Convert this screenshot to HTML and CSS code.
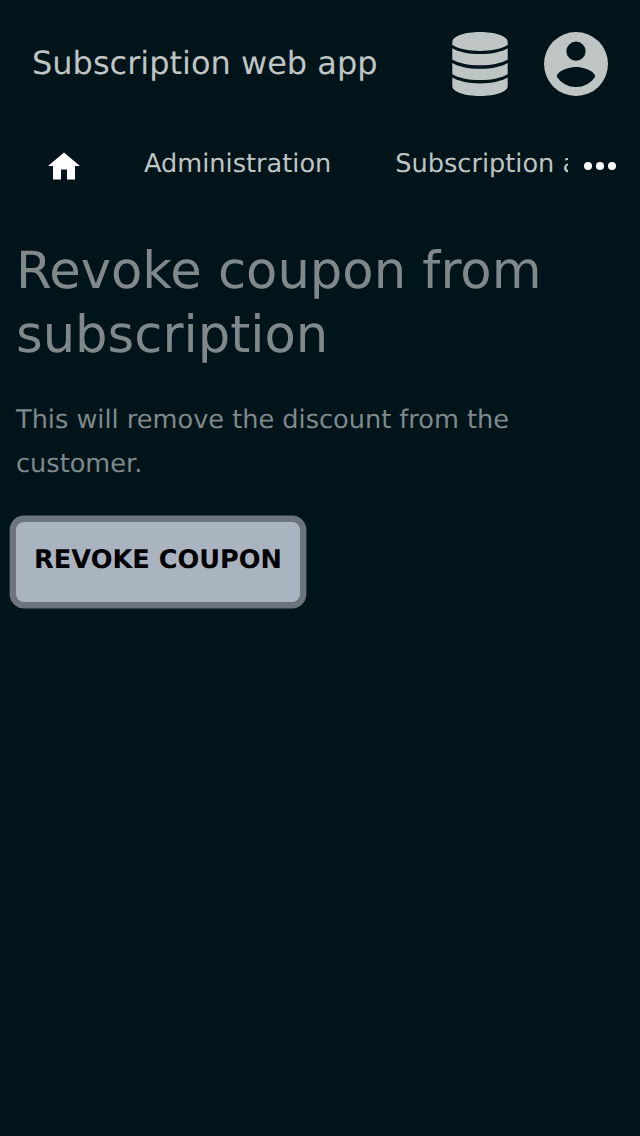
FILE: index.html
```html
<!DOCTYPE html>
<html lang="en">
<head>
<meta charset="utf-8">
<title>Subscription web app</title>
<link rel="stylesheet" href="styles.css">
</head>
<body>
<header class="header">
  <span class="brand">Subscription web app</span>
  <div class="actions">
    <svg class="database" viewBox="0 0 56 64" aria-label="Database">
      <path d="M28 0C43 0 55.700 4 55.700 10V13C50 16.500 40 18.900 28 18.900S6 16.500 .3 13V10C.3 4 13 0 28 0Z"/>
      <path d="M.3 16.300C6 19.800 16 22.100 28 22.100S50 19.800 55.700 16.300V27.500C50 31 40 33.300 28 33.300S6 31 .3 27.500Z"/>
      <path d="M.3 31C6 34.500 16 36.800 28 36.800S50 34.500 55.700 31V42.200C50 45.700 40 48 28 48S6 45.700 .3 42.200Z"/>
      <path d="M.3 45.600C6 49.100 16 51.400 28 51.400S50 49.100 55.700 45.600V54C55.700 60 43 64 28 64S.3 60 .3 54Z"/>
    </svg>
    <svg class="account" viewBox="2 2 20 20" aria-label="Account">
      <path fill-rule="evenodd" d="M12 2a10 10 0 1 0 0 20 10 10 0 0 0 0-20zM12 5a3 3 0 1 1 0 6 3 3 0 0 1 0-6zM12 19.200a7.200 7.200 0 0 1-6-3.220c.03-1.990 4-3.080 6-3.080s5.970 1.090 6 3.080a7.200 7.200 0 0 1-6 3.220z"/>
    </svg>
  </div>
</header>
<nav class="nav">
  <div class="links">
    <a class="home" aria-label="Home"><svg class="home-icon" viewBox="0 0 32 28"><path d="M16 .5L32 14H27V27.500H19V17.500H13V27.500H5V14H0Z"/></svg></a>
    <a class="link">Administration</a>
    <a class="link">Subscription administration</a>
  </div>
  <svg class="more" viewBox="0 0 32 8" aria-label="More"><circle cx="4" cy="4" r="4"/><circle cx="16" cy="4" r="4"/><circle cx="28" cy="4" r="4"/></svg>
</nav>
<main class="content">
  <h1 class="heading">Revoke coupon from subscription</h1>
  <p class="text">This will remove the discount from the customer.</p>
  <button class="button">REVOKE COUPON</button>
</main>
</body>
</html>
```

FILE: styles.css
```css
* { box-sizing: border-box; }
body {
  margin: 0;
  min-height: 1136px;
  background: #001419;
  color: #bfc4c5;
  font-family: "DejaVu Sans", sans-serif;
  text-rendering: geometricPrecision;
}
.header {
  display: flex;
  align-items: center;
  justify-content: space-between;
  height: 128px;
  padding: 0 32px;
}
.brand { font-size: 32px; line-height: 40px; padding-bottom: 2px; }
.actions { display: flex; align-items: center; gap: 36px; fill: #bfc4c5; }
.database { width: 56px; height: 64px; }
.account { width: 64px; height: 64px; }
.nav { display: flex; height: 72px; }
.links {
  display: flex;
  width: 568px;
  gap: 64px;
  padding: 16px 0 0 48px;
  overflow: hidden;
  white-space: nowrap;
}
.home { flex: none; width: 32px; padding-top: 8px; }
.home-icon { display: block; width: 32px; height: 28px; fill: #fff; }
.link { flex: none; font-size: 25.600px; line-height: 40px; }
.more { width: 32px; height: 8px; margin: 34px 0 0 16px; fill: #fff; }
.content { padding: 39px 16px 0; color: #7f898c; }
.heading { margin: 0; font-size: 51.200px; line-height: 64px; font-weight: 400; }
.text { margin: 31px 0 36px; font-size: 25.600px; line-height: 44px; }
.button {
  display: block;
  width: 284px;
  height: 80px;
  padding: 0 0 5px;
  border: 0;
  border-radius: 8px;
  background: #aab4c0;
  box-shadow: 0 0 0 6.400px #6c757e;
  color: #000;
  font: bold 25.600px "DejaVu Sans", sans-serif;
  text-rendering: inherit;
  white-space: nowrap;
}
```
